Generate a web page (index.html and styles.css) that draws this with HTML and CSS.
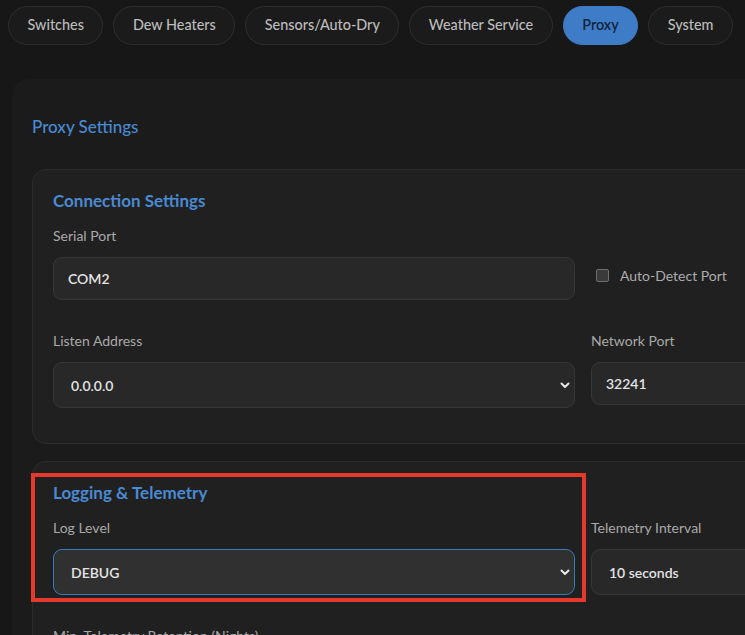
FILE: index.html
```html
<!DOCTYPE html>
<html lang="en">
<head>
    <meta charset="UTF-8">
    <meta name="viewport" content="width=device-width, initial-scale=1.0">
    <title>Proxy Settings</title>
    <link rel="stylesheet" href="styles.css">
</head>
<body>

    <nav class="tabs">
        <button class="tab">Switches</button>
        <button class="tab">Dew Heaters</button>
        <button class="tab">Sensors/Auto-Dry</button>
        <button class="tab">Weather Service</button>
        <button class="tab active">Proxy</button>
        <button class="tab">System</button>
    </nav>

    <main class="panel">
        <h2 class="panel-title">Proxy Settings</h2>

        <section class="card">
            <h3 class="card-title">Connection Settings</h3>
            <div class="grid">
                <div class="field">
                    <label for="serialPort">Serial Port</label>
                    <input type="text" id="serialPort" class="control" value="COM2">
                </div>
                <div class="check-cell">
                    <label class="check"><span class="box"></span>Auto-Detect Port</label>
                </div>

                <div class="field">
                    <label for="listenAddress">Listen Address</label>
                    <div class="select-wrap">
                        <select id="listenAddress" class="control select">
                            <option>0.0.0.0</option>
                        </select>
                        <svg class="chevron" width="10" height="7" viewBox="0 0 10 7"><path d="M1.5 1.5 L5 5 L8.5 1.5" fill="none" stroke="#e8e8e8" stroke-width="2" stroke-linecap="round" stroke-linejoin="round"/></svg>
                    </div>
                </div>
                <div class="field">
                    <label for="networkPort">Network Port</label>
                    <input type="text" id="networkPort" class="control" value="32241">
                </div>
            </div>
        </section>

        <section class="card">
            <div class="highlight"></div>
            <h3 class="card-title">Logging &amp; Telemetry</h3>
            <div class="grid">
                <div class="field">
                    <label for="logLevel">Log Level</label>
                    <div class="select-wrap">
                        <select id="logLevel" class="control select focused">
                            <option>DEBUG</option>
                        </select>
                        <svg class="chevron" width="10" height="7" viewBox="0 0 10 7"><path d="M1.5 1.5 L5 5 L8.5 1.5" fill="none" stroke="#e8e8e8" stroke-width="2" stroke-linecap="round" stroke-linejoin="round"/></svg>
                    </div>
                </div>
                <div class="field">
                    <label for="telemetryInterval">Telemetry Interval</label>
                    <select id="telemetryInterval" class="control select">
                        <option>10 seconds</option>
                    </select>
                </div>

                <div class="field">
                    <label for="retention">Min. Telemetry Retention (Nights)</label>
                    <input type="text" id="retention" class="control" value="7">
                </div>
            </div>
        </section>
    </main>

</body>
</html>
```

FILE: styles.css
```css
body {
    font-family: 'Lato', 'Liberation Sans', sans-serif;
    margin: 0;
    background-color: #171717;
    color: #b4b4b4;
    overflow: hidden;
    height: 635px;
}
.tabs {
    display: flex;
    gap: 10px;
    padding: 6px 8px 0;
}
.tab {
    font-family: inherit;
    font-size: 14.4px;
    font-weight: 500;
    line-height: 18px;
    color: #bcbcbc;
    background-color: #1b1b1b;
    border: 1px solid #2e2e2e;
    border-radius: 20px;
    padding: 9px 18.5px 10px;
    white-space: nowrap;
}
.tab.active {
    background-color: #3f7cc8;
    border-color: #3f7cc8;
    color: #13243c;
    font-weight: 600;
}
.panel {
    width: 1000px;
    margin: 34px 0 0 12px;
    padding: 38px 20px 20px;
    background-color: #1b1b1b;
    border-radius: 16px;
}
.panel-title {
    margin: 0 0 32px;
    font-size: 17px;
    line-height: 20px;
    font-weight: 500;
    color: #4a8ad3;
}
.card {
    position: relative;
    background-color: #202020;
    border: 1px solid #2c2c2c;
    border-radius: 14px;
    padding: 21px 20px 35px;
    margin-bottom: 17px;
}
.card-title {
    margin: 0 0 16px;
    font-size: 17px;
    line-height: 20px;
    font-weight: 700;
    color: #4a8ad3;
}
.grid {
    display: grid;
    grid-template-columns: 522px 1fr;
    column-gap: 16px;
    row-gap: 32px;
}
.field label {
    display: block;
    font-size: 14px;
    line-height: 18px;
    color: #a9a9a9;
    margin-bottom: 12px;
}
.control {
    box-sizing: border-box;
    width: 100%;
    height: 43px;
    font-family: inherit;
    font-size: 14px;
    font-weight: 600;
    color: #e4e4e4;
    background-color: #282828;
    border: 1px solid #373737;
    border-radius: 9px;
    padding: 0 14px;
    outline: none;
}
.select {
    appearance: none;
    height: 46px;
    padding: 0 17px;
}
.select.focused {
    background-color: #303030;
    border-color: #3a7bbd;
}
.select-wrap {
    position: relative;
}
.chevron {
    position: absolute;
    right: 5px;
    top: 20px;
}
.check-cell {
    display: flex;
    align-items: center;
    padding-top: 24px;
    padding-left: 5px;
}
.check {
    display: flex;
    align-items: center;
    gap: 11px;
    font-size: 14px;
    color: #acacac;
}
.box {
    width: 11px;
    height: 11px;
    border: 1px solid #6e6e6e;
    border-radius: 2px;
    background-color: #3a3a3a;
}
.highlight {
    position: absolute;
    left: -2px;
    top: 11px;
    width: 547px;
    height: 121px;
    border: 4px solid #e5392b;
    pointer-events: none;
}
```
